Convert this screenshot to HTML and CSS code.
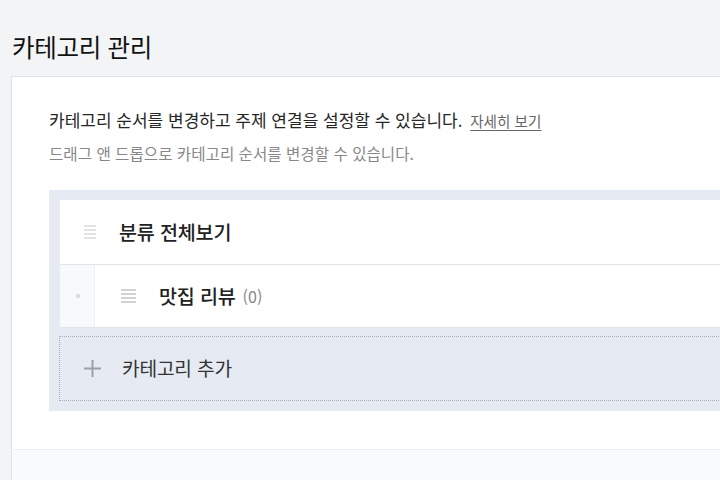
FILE: index.html
```html
<!DOCTYPE html>
<html lang="ko">
<head>
<meta charset="utf-8">
<title>카테고리 관리</title>
<link rel="stylesheet" href="styles.css">
</head>
<body>
<div class="page">
  <h1 class="title">카테고리 관리</h1>
  <section class="card">
    <div class="card-body">
      <p class="desc">카테고리 순서를 변경하고 주제 연결을 설정할 수 있습니다. <a class="more" href="#">자세히 보기</a></p>
      <p class="hint">드래그 앤 드롭으로 카테고리 순서를 변경할 수 있습니다.</p>
      <div class="tree">
        <ul class="list">
          <li class="row row-top">
            <svg class="handle handle-top" width="12" height="14" viewBox="0 0 12 14"><g stroke="#cfcfcf" stroke-width="1.2"><line x1="0" y1="1" x2="12" y2="1"/><line x1="0" y1="5" x2="12" y2="5"/><line x1="0" y1="9" x2="12" y2="9"/><line x1="0" y1="13" x2="12" y2="13"/></g></svg>
            <span class="name">분류 전체보기</span>
          </li>
          <li class="row row-sub">
            <div class="indent"><span class="dot"></span></div>
            <svg class="handle handle-sub" width="15" height="14" viewBox="0 0 15 14"><g stroke="#b4b4b4" stroke-width="1.2"><line x1="0" y1="1" x2="15" y2="1"/><line x1="0" y1="5" x2="15" y2="5"/><line x1="0" y1="9" x2="15" y2="9"/><line x1="0" y1="13" x2="15" y2="13"/></g></svg>
            <span class="name">맛집 리뷰</span><span class="count">(0)</span>
          </li>
        </ul>
        <button class="add" type="button">
          <svg class="plus" width="17" height="17" viewBox="0 0 17 17"><g stroke="#9aa0a8" stroke-width="2"><line x1="0" y1="8.5" x2="17" y2="8.5"/><line x1="8.5" y1="0" x2="8.5" y2="17"/></g></svg>
          <span class="add-label">카테고리 추가</span>
        </button>
      </div>
    </div>
    <div class="card-foot"></div>
  </section>
</div>
</body>
</html>
```
FILE: styles.css
```css
html, body {
  margin: 0;
  padding: 0;
  background: #f3f4f6;
  overflow: hidden;
  height: 100%;
}
body {
  font-family: "Noto Sans CJK KR", "Noto Sans", sans-serif;
  color: #222;
}
.page {
  padding-top: 30px;
}
.title {
  margin: 0 0 12px 0;
  padding-left: 12px;
  font-size: 24.5px;
  line-height: 34px;
  font-weight: 400;
  color: #111;
  letter-spacing: -0.3px;
}
.card {
  margin-left: 11px;
  margin-right: -300px;
  background: #fff;
  border-top: 1px solid #dde2ea;
  border-left: 1px solid #dde2ea;
  height: 600px;
}
.card-body {
  padding: 31px 0 38px 37px;
}
.desc {
  margin: 0;
  font-size: 17px;
  line-height: 24px;
  color: #262626;
}
.more {
  margin-left: 3px;
  font-size: 14.6px;
  color: #666;
  text-decoration: underline;
  text-underline-offset: 3px;
}
.hint {
  margin: 8px 0 25px 0;
  font-size: 15.6px;
  line-height: 24px;
  color: #888;
}
.tree {
  background: #e6eaf2;
  padding: 10px 0 10px 11px;
}
.list {
  list-style: none;
  margin: 0;
  padding: 0;
  background: #fff;
}
.row {
  display: flex;
  align-items: center;
  border-bottom: 1px solid #e1e4e9;
}
.row-top {
  height: 64px;
}
.row-sub {
  height: 62px;
}
.handle {
  flex: none;
  display: block;
}
.handle-top {
  margin-left: 24px;
  margin-right: 23px;
}
.indent {
  flex: none;
  width: 34px;
  height: 100%;
  border-right: 1px solid #eef0f3;
  background: #f8f9fb;
  display: flex;
  align-items: center;
  justify-content: center;
}
.dot {
  width: 4px;
  height: 4px;
  background: #dcdde0;
  margin-left: 1px;
}
.handle-sub {
  margin-left: 26px;
  margin-right: 23px;
}
.name {
  font-size: 19.6px;
  font-weight: 500;
  color: #222;
  letter-spacing: -0.2px;
  position: relative;
  top: -1px;
}
.count {
  margin-left: 7px;
  font-size: 16px;
  color: #888;
}
.add {
  display: flex;
  align-items: center;
  width: 100%;
  height: 65px;
  margin: 8px 0 0 -1px;
  padding: 0;
  background: transparent;
  border: 1px dotted #a9adb5;
  font-family: inherit;
  cursor: pointer;
}
.plus {
  margin-left: 24px;
  margin-right: 21px;
  display: block;
}
.add-label {
  font-size: 19.2px;
  color: #333;
  letter-spacing: -0.2px;
  position: relative;
  top: -1px;
}
.card-foot {
  border-top: 1px solid #eceef1;
  background: #f9fafb;
  height: 200px;
  margin-left: 1px;
}
```
